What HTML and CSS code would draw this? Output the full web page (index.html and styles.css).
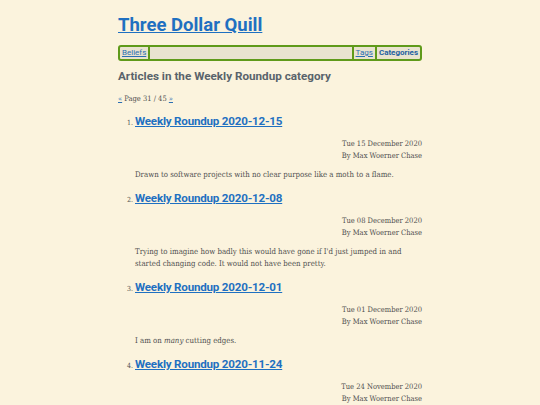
FILE: index.html
```html
<!DOCTYPE html>
<html>
<head>
<meta charset="utf-8">
<link rel="stylesheet" href="styles.css">
</head>
<body>
<div class="page">
  <header class="site-header">
    <h1 class="site-title"><a href="#">Three Dollar Quill</a></h1>
    <nav class="nav">
      <a class="nav-link first" href="#">Beliefs</a>
      <span class="nav-fill"></span>
      <a class="nav-link sep" href="#">Tags</a>
      <a class="nav-link sep current" href="#">Categories</a>
    </nav>
  </header>
  <main>
    <h2 class="cat-title">Articles in the Weekly Roundup category</h2>
    <p class="pager"><a href="#">«</a> Page 31 / 45 <a href="#">»</a></p>
    <ol class="articles">
      <li class="article">
        <h3 class="art-title"><a href="#">Weekly Roundup 2020-12-15</a></h3>
        <div class="meta">
          <div>Tue 15 December 2020</div>
          <div>By Max Woerner Chase</div>
        </div>
        <p class="summary">Drawn to software projects with no clear purpose like a moth to a flame.</p>
      </li>
      <li class="article">
        <h3 class="art-title"><a href="#">Weekly Roundup 2020-12-08</a></h3>
        <div class="meta">
          <div>Tue 08 December 2020</div>
          <div>By Max Woerner Chase</div>
        </div>
        <p class="summary">Trying to imagine how badly this would have gone if I'd just jumped in and started changing code. It would not have been pretty.</p>
      </li>
      <li class="article">
        <h3 class="art-title"><a href="#">Weekly Roundup 2020-12-01</a></h3>
        <div class="meta">
          <div>Tue 01 December 2020</div>
          <div>By Max Woerner Chase</div>
        </div>
        <p class="summary">I am on <em>many</em> cutting edges.</p>
      </li>
      <li class="article">
        <h3 class="art-title"><a href="#">Weekly Roundup 2020-11-24</a></h3>
        <div class="meta">
          <div>Tue 24 November 2020</div>
          <div>By Max Woerner Chase</div>
        </div>
      </li>
    </ol>
  </main>
</div>
</body>
</html>
```
FILE: styles.css
```css
html, body {
  margin: 0;
  padding: 0;
  background: #fbf3dd;
}
body {
  font-family: "DejaVu Serif Condensed", "DejaVu Serif", serif;
  color: #505050;
}
.page {
  width: 304px;
  margin: 0 auto;
  padding-top: 14px;
}
.site-title {
  margin: 0;
  font-family: Roboto, "Noto Sans", sans-serif;
  font-size: 18.5px;
  line-height: 22px;
  font-weight: 700;
}
.site-title a {
  color: #1f70c1;
}
.nav {
  display: flex;
  align-items: stretch;
  margin-top: 9px;
  height: 12px;
  border: 2px solid #5f9a1a;
  border-radius: 3px;
  background: #e9e3cf;
  font-family: Roboto, "Noto Sans", sans-serif;
  font-size: 8px;
  line-height: 12px;
}
.nav-link {
  color: #2b6fb3;
  padding: 0 2px;
}
.nav-link.first {
  border-right: 2px solid #5f9a1a;
}
.nav-fill {
  flex: 1;
}
.nav-link.sep {
  border-left: 2px solid #5f9a1a;
}
.nav-link.current {
  font-weight: 700;
  text-decoration: none;
  color: #24609f;
}
.cat-title {
  margin: 7px 0 0;
  font-family: Roboto, "Noto Sans", sans-serif;
  font-size: 11.7px;
  line-height: 16px;
  font-weight: 700;
  color: #59636b;
}
.pager {
  margin: 10px 0 0;
  font-size: 7.5px;
  line-height: 10px;
}
.pager a {
  color: #2b6fb3;
}
.articles {
  margin: 9px 0 0;
  padding-left: 17px;
}
.article {
  font-size: 7px;
}
.art-title {
  margin: 0;
  font-family: Roboto, "Noto Sans", sans-serif;
  font-size: 11.6px;
  line-height: 16px;
  font-weight: 700;
  letter-spacing: -0.2px;
}
.art-title a {
  color: #1f70c1;
}
.meta {
  margin-top: 9px;
  text-align: right;
  font-size: 7.5px;
  line-height: 12px;
}
.summary {
  margin: 7px 0 9px;
  font-size: 7.8px;
  line-height: 12px;
}
```
